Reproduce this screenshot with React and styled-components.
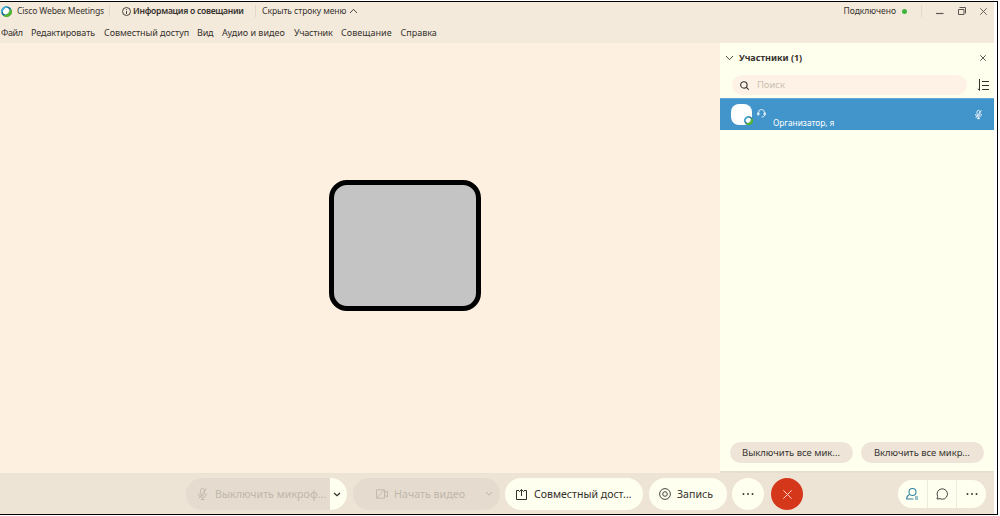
import React from "react";
import styled, { createGlobalStyle } from "styled-components";

const Global = createGlobalStyle`
  * { box-sizing: border-box; }
  body { margin: 0; background: #fff; font-family: "Noto Sans", "Open Sans", sans-serif; color: #35322e; overflow: hidden; }
  button { font-family: inherit; color: inherit; border: 0; padding: 0; margin: 0; background: none; }
`;

const Page = styled.div`
  width: 1000px; height: 516px; padding: 1px 2px 1px 0;
`;
const Window = styled.div`
  width: 998px; height: 514px; padding-right: 3px;
  border: 1px solid #000; border-left: 0;
  display: flex; flex-direction: column;
`;
const Header = styled.header`height: 41px; flex: none; background: #f4eadc;`;
const TitleBar = styled.div`display: flex; align-items: center; height: 18px; padding-left: 1px;`;
const MenuBar = styled.nav`display: flex; height: 23px; align-items: center; padding: 2px 0 0 1px;`;

const Text = styled.span`
  display: block; flex: none; white-space: nowrap; line-height: 14px;
  font-size: ${p => p.$size || 9}px;
  font-weight: ${p => p.$weight || 400};
  letter-spacing: ${p => p.$spacing || 0}px;
  width: ${p => (p.$w ? p.$w + "px" : "auto")};
  color: ${p => p.$color || "inherit"};
`;
const TitleText = styled(Text)`margin-left: ${p => p.$left}px;`;
const Icon = styled.svg`display: block; flex: none; fill: none; stroke: currentColor; overflow: visible;`;
const SolidIcon = styled.svg`display: block; flex: none; fill: currentColor; overflow: visible;`;
const Divider = styled.i`
  width: 1px; height: 12px; background: #e2d9cb; flex: none;
  margin: 0 ${p => p.$right}px 0 ${p => p.$left}px;
`;
const Online = styled.i`width: 5px; height: 5px; border-radius: 50%; background: #3fb53f; margin-left: 6px;`;
const Right = styled.div`
  margin-left: auto; display: flex; align-items: center; padding-right: 7px;
`;
const WindowControls = styled.div`display: flex; align-items: center; gap: 14px; color: #5c5650;`;

const Body = styled.div`flex: none; height: 430px; display: flex;`;
const Stage = styled.main`
  width: 720px; background: #fdf0e1; padding: 137px 0 0 329px;
`;
const VideoTile = styled.div`
  width: 152px; height: 131px; border: 5px solid #000; border-radius: 18px; background: #c4c4c4;
`;
const Panel = styled.aside`
  flex: 1; display: flex; flex-direction: column; background: #ffffee; height: 430px;
  border-bottom: 2px solid #e6dece;
`;
const PanelHead = styled.div`
  height: 29px; display: flex; align-items: center; padding: 0 8px 0 6px;
  > ${Text} { margin-left: 6px; }
  > svg:last-child { margin-left: auto; }
`;
const SearchRow = styled.div`
  height: 26px; display: flex; align-items: flex-start; padding: 3px 0 0 12px;
  > svg { margin: 4px 0 0 11px; }
`;
const SearchField = styled.div`
  width: 235px; height: 20px; border-radius: 10px; background: #fdf2e5;
  display: flex; align-items: center; padding-left: 8px; gap: 8px;
`;
const Participant = styled.div`
  height: 32px; background: #4195cb; color: #fff; border-top: 1px solid #61a8d5;
  display: flex; padding-left: 11px;
`;
const Avatar = styled.div`
  position: relative; width: 21px; height: 21px; border-radius: 8px; background: #fff; margin-top: 5px;
  > svg { position: absolute; right: -1px; bottom: 0; }
`;
const Role = styled.div`
  display: flex; padding: 10px 0 0 5px; gap: 7px; flex: 1;
  > ${Text} { padding-top: 7px; }
`;
const MutedMark = styled.div`padding: 11px 12px 0 0;`;
const PanelActions = styled.div`margin-top: auto; display: flex; gap: 8px; padding: 0 0 8px 10px;`;
const PanelButton = styled.button`
  width: 123px; height: 21px; border-radius: 11px; background: #eee5d8;
  display: flex; align-items: center; padding-left: ${p => p.$left}px;
`;

const Toolbar = styled.footer`
  flex: 1; background: #ede4d6; display: flex; align-items: flex-start; padding: 5px 8px 0 186px;
`;
const Pill = styled.button`
  width: ${p => p.$w}px; height: 32px; border-radius: 16px; overflow: hidden; flex: none;
  margin-right: ${p => p.$gap}px; padding-left: ${p => p.$left}px;
  display: flex; align-items: center;
  background: ${p => (p.$disabled ? "#e5dccf" : "#fffff0")};
  color: ${p => (p.$disabled ? "#bfb7aa" : "#33302c")};
  > ${Text} { margin-left: ${p => p.$inner}px; line-height: 18px; }
`;
const PillMenu = styled.span`
  margin-left: auto; width: ${p => p.$w}px; height: 100%;
  display: flex; align-items: center; padding-left: ${p => p.$left}px;
  background: ${p => (p.$active ? "#fffff0" : "transparent")};
  color: ${p => (p.$active ? "#33302c" : "inherit")};
`;
const RoundButton = styled.button`
  width: 32px; height: 32px; border-radius: 50%; flex: none; margin-right: ${p => p.$gap}px;
  display: grid; place-items: center;
  background: ${p => (p.$danger ? "#d5371a" : "#fffff0")};
  color: ${p => (p.$danger ? "#f8d3c8" : "#33302c")};
`;
const ViewGroup = styled.div`
  margin: 2px 0 0 auto; width: 88px; height: 28px; border-radius: 14px; overflow: hidden;
  display: flex; background: #fffff0;
`;
const ViewButton = styled.button`
  flex: 1; display: grid; place-items: center; color: ${p => p.$color || "#33302c"};
  & + & { border-left: 1px solid #eeeadb; }
`;

const Logo = ({ size }) => (
  <SolidIcon width={size} height={size} viewBox="0 0 12 12">
    <circle cx="6" cy="6" r="5.8" fill="#176f95" />
    <path d="M6 .2A5.8 5.8 0 0 0 .6 8C2 5 3 2 8 1Z" fill="#3fb1dc" />
    <path d="M11.5 4A5.8 5.8 0 0 1 2 10.2C6 10 9.5 8 9.8 3Z" fill="#56b82d" />
    <ellipse cx="5.6" cy="5.6" rx="3.8" ry="3.1" transform="rotate(-48 5.6 5.6)" fill="#fff" />
  </SolidIcon>
);
const Cross = ({ size = 7, sw = 0.9 }) => (
  <Icon width={size} height={size} viewBox="0 0 8 8" strokeWidth={(sw * 8) / size}><path d="M.3.3l7.4 7.4M7.7.3L.3 7.7" /></Icon>
);
const Chevron = ({ w = 7, h = 4, up, sw = 1 }) => (
  <Icon width={w} height={h} strokeWidth={sw}>
    <path d={up ? `M0 ${h}L${w / 2} .3L${w} ${h}` : `M0 0L${w / 2} ${h - 0.3}L${w} 0`} />
  </Icon>
);
const Dots = () => (
  <SolidIcon width="12" height="2">
    <circle cx="1.5" cy="1" r=".95" /><circle cx="6" cy="1" r=".95" /><circle cx="10.5" cy="1" r=".95" />
  </SolidIcon>
);
const MicOff = ({ w, h, sw }) => (
  <Icon width={w} height={h} viewBox="0 0 9 12" strokeWidth={sw}>
    <rect x="2.5" y=".5" width="4" height="7" rx="2" />
    <path d="M.6 5.5C.6 8 2.3 9.3 4.5 9.3S8.4 8 8.4 5.5M4.5 9.3V11.5M2.5 11.5H6.5M8.5.5L.8 10.5" />
  </Icon>
);

const menu = [
  ["Файл", 30, -0.4], ["Редактировать", 73, -0.08], ["Совместный доступ", 93, -0.08], ["Вид", 25, -0.2],
  ["Аудио и видео", 72, 0], ["Участник", 47, -0.2], ["Совещание", 59.5, 0.05], ["Справка", 40, 0],
];

export default function App() {
  return (
    <Page>
      <Global />
      <Window>
        <Header>
          <TitleBar>
            <Logo size={11} />
            <TitleText $left={5} $size={8.6} $spacing={-0.16} $w={88}>Cisco Webex Meetings</TitleText>
            <Divider $left={4} $right={12} />
            <Icon width="9" height="9" strokeWidth=".9"><circle cx="4.5" cy="4.5" r="4" /><path d="M4.5 4V7M4.5 2.2V3.1" /></Icon>
            <TitleText $left={2} $size={8.6} $weight={600} $spacing={-0.27} $w={112}>Информация о совещании</TitleText>
            <Divider $left={10} $right={6} />
            <Text $size={8.6} $spacing={-0.09} $w={88}>Скрыть строку меню</Text>
            <Chevron w={7} h={4} up sw={0.9} />
            <Right>
              <Text $size={8.5}>Подключено</Text>
              <Online />
              <Divider $left={14} $right={14} />
              <WindowControls>
                <Icon width="8" height="8" strokeWidth="1.2"><path d="M0 6.5H7.5" /></Icon>
                <Icon width="8" height="8" strokeWidth="1"><path d="M.5 2.5H6V7.5H.5ZM1.5 .5H7.5V6.5" /></Icon>
                <Cross size={7} />
              </WindowControls>
            </Right>
          </TitleBar>
          <MenuBar>
            {menu.map(([label, w, s]) => <Text key={label} $w={w} $spacing={s}>{label}</Text>)}
          </MenuBar>
        </Header>

        <Body>
          <Stage><VideoTile /></Stage>
          <Panel>
            <PanelHead>
              <Chevron w={7} h={4} sw={0.9} />
              <Text $weight={700}>Участники (1)</Text>
              <Cross size={6} sw={0.8} />
            </PanelHead>
            <SearchRow>
              <SearchField>
                <Icon width="9" height="9" strokeWidth="1.1"><circle cx="3.9" cy="3.9" r="3.2" /><path d="M6.2 6.2L8.7 8.7" /></Icon>
                <Text $size={9.4} $color="#c9bfb2">Поиск</Text>
              </SearchField>
              <Icon width="12" height="12" strokeWidth="1"><path d="M1.5 0V11.5M0 9.7L1.5 11.5M4 2.5H11M4 6.5H11M4 10.5H11" /></Icon>
            </SearchRow>
            <Participant>
              <Avatar><Logo size={9} /></Avatar>
              <Role>
                <Icon width="9" height="9" strokeWidth=".8"><path d="M1.5 5V3.5A3 3 0 0 1 7.5 3.5V5M1.5 3.8H.6V6H2V3.8M7.5 3.8H8.4V6H7V3.8M7.5 6C7.5 7.5 6.5 8 4.5 8" /></Icon>
                <Text $size={8.3}>Организатор, я</Text>
              </Role>
              <MutedMark><MicOff w={7} h={9} sw={1.1} /></MutedMark>
            </Participant>
            <PanelActions>
              <PanelButton $left={12}><Text $size={9.45}>Выключить все мик...</Text></PanelButton>
              <PanelButton $left={13}><Text $size={9.4}>Включить все микр...</Text></PanelButton>
            </PanelActions>
          </Panel>
        </Body>

        <Toolbar>
          <Pill $w={161} $gap={5.5} $left={12} $inner={8} $disabled>
            <MicOff w={9} h={12} sw={0.9} />
            <Text $size={10.65}>Выключить микроф...</Text>
            <PillMenu $w={17} $left={4} $active><Chevron w={6} h={3} sw={1.3} /></PillMenu>
          </Pill>
          <Pill $w={147.5} $gap={5} $left={23.5} $inner={6} $disabled>
            <Icon width="12" height="10" strokeWidth=".9"><path d="M.5.8H8.5V9.2H.5ZM8.5 4L11.5 2V8L8.5 6M8.5.8L.5 9.2" /></Icon>
            <Text $size={10.7}>Начать видео</Text>
            <PillMenu $w={14} $left={0}><Chevron w={6} h={3.5} /></PillMenu>
          </Pill>
          <Pill $w={138} $gap={6} $left={11} $inner={7}>
            <Icon width="11" height="11" strokeWidth="1"><path d="M3 1.5H.5V10.5H10.5V1.5H8M5.5 7V.5M3.2 2.8L5.5 .5L7.8 2.8" /></Icon>
            <Text $size={10.55}>Совместный дост...</Text>
          </Pill>
          <Pill $w={78} $gap={5} $left={10} $inner={6}>
            <Icon width="12" height="12" strokeWidth=".9"><circle cx="6" cy="6" r="5.4" /><circle cx="6" cy="6" r="2.3" /></Icon>
            <Text $size={10.6}>Запись</Text>
          </Pill>
          <RoundButton $gap={7}><Dots /></RoundButton>
          <RoundButton $gap={0} $danger><Cross size={9} sw={1} /></RoundButton>
          <ViewGroup>
            <ViewButton $color="#3584a4">
              <Icon width="12" height="12" strokeWidth="1.1"><circle cx="6.5" cy="4" r="3.5" /><path d="M3.5 6.5C1.5 7.5 .6 9 .6 11H7.5M9 9H12M9 11H12" /></Icon>
            </ViewButton>
            <ViewButton>
              <Icon width="12" height="12" strokeWidth=".9"><path d="M1 11L1.7 8.5A5.2 5.2 0 1 1 4 10.7Z" /></Icon>
            </ViewButton>
            <ViewButton><Dots /></ViewButton>
          </ViewGroup>
        </Toolbar>
      </Window>
    </Page>
  );
}
